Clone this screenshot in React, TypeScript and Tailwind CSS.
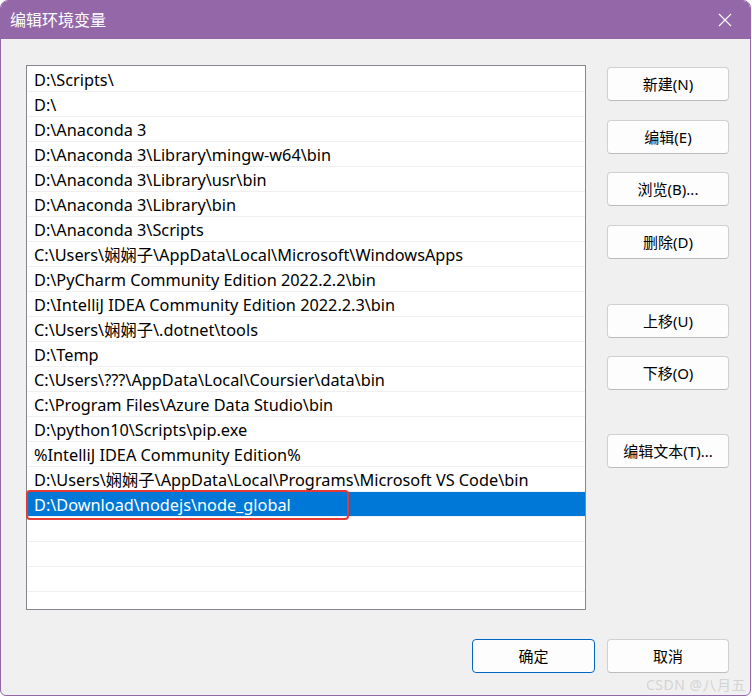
import React from 'react'

const paths = [
  'D:\\Scripts\\',
  'D:\\',
  'D:\\Anaconda 3',
  'D:\\Anaconda 3\\Library\\mingw-w64\\bin',
  'D:\\Anaconda 3\\Library\\usr\\bin',
  'D:\\Anaconda 3\\Library\\bin',
  'D:\\Anaconda 3\\Scripts',
  'C:\\Users\\娴娴子\\AppData\\Local\\Microsoft\\WindowsApps',
  'D:\\PyCharm Community Edition 2022.2.2\\bin',
  'D:\\IntelliJ IDEA Community Edition 2022.2.3\\bin',
  'C:\\Users\\娴娴子\\.dotnet\\tools',
  'D:\\Temp',
  'C:\\Users\\???\\AppData\\Local\\Coursier\\data\\bin',
  'C:\\Program Files\\Azure Data Studio\\bin',
  'D:\\python10\\Scripts\\pip.exe',
  '%IntelliJ IDEA Community Edition%',
  'D:\\Users\\娴娴子\\AppData\\Local\\Programs\\Microsoft VS Code\\bin',
]

const selected = 'D:\\Download\\nodejs\\node_global'

// side buttons with their top margin (px) above each
const sideButtons: { label: string; mt: string }[] = [
  { label: '新建(N)', mt: 'mt-[2px]' },
  { label: '编辑(E)', mt: 'mt-[19px]' },
  { label: '浏览(B)...', mt: 'mt-[18px]' },
  { label: '删除(D)', mt: 'mt-[19px]' },
  { label: '上移(U)', mt: 'mt-[45px]' },
  { label: '下移(O)', mt: 'mt-[18px]' },
  { label: '编辑文本(T)...', mt: 'mt-[44px]' },
]

function WinButton({ label, primary, className }: { label: string; primary?: boolean; className?: string }) {
  return (
    <div
      className={
        'flex items-center justify-center h-[34px] rounded-[4px] bg-[#fdfdfd] text-[15px] text-black ' +
        (primary ? 'border border-[#0067c0] ' : 'border border-[#d0d0d0] border-b-[#bcbcbc] ') +
        (className ?? '')
      }
    >
      {label}
    </div>
  )
}

export default function App() {
  return (
    <div
      className="w-[752px] h-[696px] bg-white"
      style={{ fontFamily: '"Noto Sans", "Noto Sans CJK SC", sans-serif' }}
    >
      <div className="relative w-[751px] h-[696px] rounded-t-[8px] rounded-b-[6px] border border-[#9467a8] bg-[#f0f0f0] overflow-hidden flex flex-col">
        {/* title bar */}
        <div className="h-[38px] bg-[#9467a8] flex items-center justify-between pl-[9px] pr-[16px] shrink-0">
          <span className="text-[16px] text-white leading-none">编辑环境变量</span>
          <svg width="14" height="14" viewBox="0 0 14 14" className="mr-[2px]">
            <path d="M1 1 L13 13 M13 1 L1 13" stroke="white" strokeWidth="1.1" fill="none" />
          </svg>
        </div>

        <div className="flex pl-[25px] pt-[26px]">
          {/* path list */}
          <div className="relative w-[560px] h-[545px] border border-[#828790] bg-white pt-[1px]">
            {paths.map((p, i) => (
              <div
                key={i}
                className="h-[25px] border-b border-[#f0f0f0] pl-[7px] pt-[2px] flex items-center text-[16.3px] text-black whitespace-nowrap leading-none"
              >
                {p}
              </div>
            ))}
            <div className="h-[25px] border-b border-[#f0f0f0] flex">
              <div className="h-[24px] w-full bg-[#0078d7] pl-[7px] pt-[2px] flex items-center text-[16.3px] text-white leading-none">
                {selected}
              </div>
            </div>
            {[0, 1, 2].map(i => (
              <div key={i} className="h-[25px] border-b border-[#f0f0f0]" />
            ))}
            {/* red annotation box */}
            <div className="absolute left-[-1px] top-[424px] w-[323px] h-[30px] border-2 border-[#e53935] rounded-[4px]" />
          </div>

          {/* side buttons */}
          <div className="ml-[21px] w-[122px] flex flex-col">
            {sideButtons.map(b => (
              <WinButton key={b.label} label={b.label} className={b.mt} />
            ))}
          </div>
        </div>

        {/* bottom buttons */}
        <div className="flex justify-end gap-[12px] pr-[21px] mt-[29px]">
          <WinButton label="确定" primary className="w-[123px]" />
          <WinButton label="取消" className="w-[122px]" />
        </div>

        {/* watermark */}
        <div className="absolute right-[4px] bottom-[3px] text-[14px] text-[#d4d4d4] leading-none tracking-[0.5px]">
          CSDN @八月五
        </div>
      </div>
    </div>
  )
}
